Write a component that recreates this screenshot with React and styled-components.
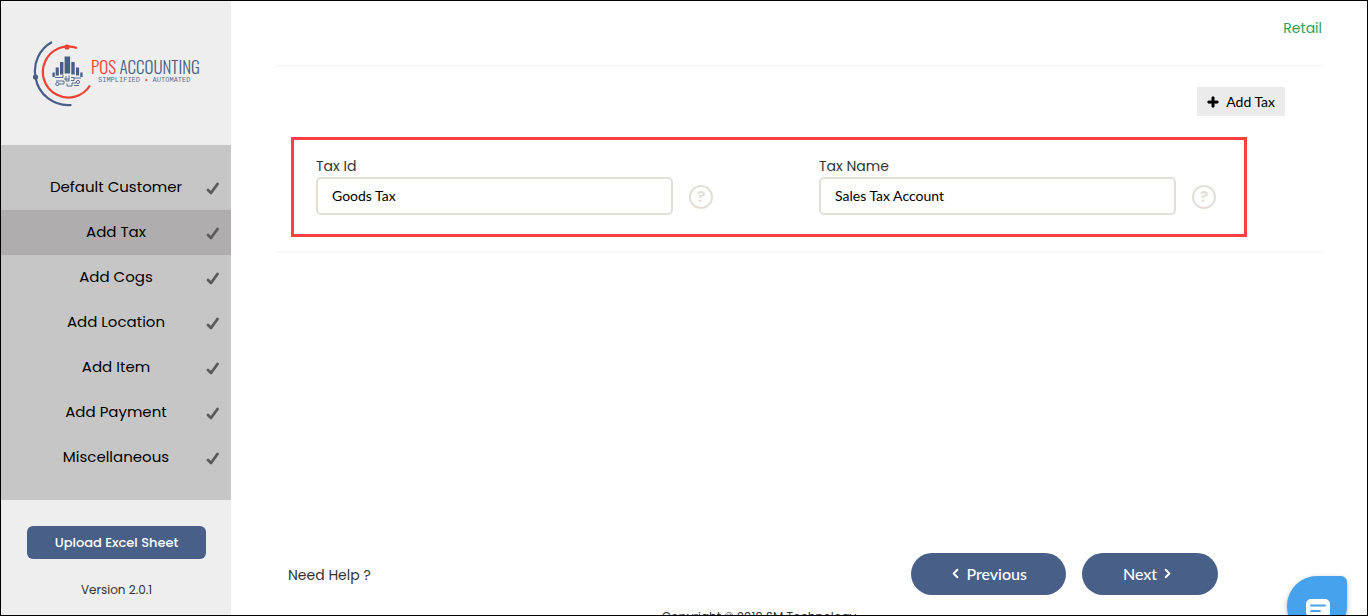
import React, { useState } from "react";
import styled, { createGlobalStyle } from "styled-components";
import { FaPlus } from "react-icons/fa";
import { FiChevronLeft, FiChevronRight } from "react-icons/fi";

const GlobalStyle = createGlobalStyle`
  * {
    box-sizing: border-box;
  }
  body {
    margin: 0;
    background: #fff;
    color: #333;
    font-family: Poppins, Inter, sans-serif;
    font-size: 14px;
  }
  button, input {
    font-family: Lato, sans-serif;
  }
`;

const Frame = styled.div`
  position: relative;
  display: flex;
  height: 100vh;
  overflow: hidden;
  border: 1px solid #000;
`;

const Sidebar = styled.aside`
  display: flex;
  flex-direction: column;
  flex: 0 0 230px;
  background: #eee;
`;

const Brand = styled.a`
  display: flex;
  justify-content: center;
  padding: 38px 0;
`;

const Menu = styled.nav`
  padding: 20px 0;
  background: #c6c6c6;
`;

const MenuItem = styled.a`
  display: grid;
  grid-template-columns: 36px 1fr 36px;
  align-items: center;
  height: 45px;
  padding-bottom: 2px;
  color: #000;
  background: ${(props) => (props.$active ? "#afadad" : "transparent")};
  font-size: 15px;
  text-align: center;
  text-decoration: none;

  span {
    grid-column: 2;
  }
  svg {
    justify-self: center;
    margin-top: 4px;
  }
`;

const SidebarBottom = styled.div`
  display: flex;
  flex-direction: column;
  align-items: center;
  gap: 22px;
  padding: 26px 25px 26px 26px;
  font-size: 12px;
`;

const UploadButton = styled.button`
  width: 100%;
  height: 33px;
  border: 0;
  border-radius: 6px;
  background: #485f88;
  color: #fff;
  font-family: Poppins, Inter, sans-serif;
  font-size: 13px;
  font-weight: 500;
  cursor: pointer;
`;

const Main = styled.main`
  display: flex;
  flex-direction: column;
  flex: 1;
  min-height: calc(100vh + 9px);
  padding: 0 45px;
`;

const Header = styled.header`
  display: flex;
  justify-content: flex-end;
  padding: 17px 0 27px;
  border-bottom: 2px solid #f9f9f9;
  color: #2fa14f;
  line-height: 20px;
`;

const Section = styled.section`
  padding: 20px 75px 14px 15px;
  border-bottom: 2px solid #f9f9f9;
`;

const Toolbar = styled.div`
  display: flex;
  justify-content: flex-end;
  margin: 0 -38px 21px 0;
`;

const AddButton = styled.button`
  display: flex;
  align-items: center;
  gap: 7px;
  height: 29px;
  padding: 0 10px;
  border: 0;
  background: #ebebeb;
  color: #000;
  font-size: 14px;
  cursor: pointer;
`;

const TaxForm = styled.form`
  display: grid;
  grid-template-columns: 1fr 1fr;
  gap: 106px;
  padding: 17px 28px 19px 22px;
  border: 3px solid #f94144;
`;

const Label = styled.label`
  display: block;
  padding-bottom: 2px;
  line-height: 18px;
`;

const FieldRow = styled.div`
  display: flex;
  align-items: center;
  gap: 16px;
`;

const Input = styled.input`
  flex: 1;
  min-width: 0;
  height: 38px;
  padding: 0 14px 2px;
  border: 2px solid #e3dfd7;
  border-radius: 5px;
  background: #fff;
  color: #000;
  font-size: 14px;
`;

const HelpButton = styled.button`
  width: 24px;
  height: 24px;
  margin-top: 2px;
  padding: 0;
  border: 2px solid #e3dfd7;
  border-radius: 50%;
  background: #fff;
  color: #e3dfd7;
  font-family: Poppins, Inter, sans-serif;
  font-size: 16px;
  font-weight: 600;
  line-height: 20px;
`;

const Footer = styled.footer`
  margin-top: auto;
`;

const Actions = styled.div`
  display: flex;
  align-items: center;
  gap: 16px;
  padding: 0 104px 0 12px;
`;

const HelpLink = styled.a`
  margin-right: auto;
  padding-top: 2px;
  color: #333;
  text-decoration: none;
`;

const PillButton = styled.button`
  display: flex;
  align-items: center;
  justify-content: center;
  gap: 3px;
  min-width: 136px;
  height: 42px;
  padding: 0 39px 2px 37px;
  border: 0;
  border-radius: 21px;
  background: #485f88;
  color: #fff;
  font-size: 16px;
  font-weight: 500;
  cursor: pointer;
`;

const Copyright = styled.p`
  margin: 13px 80px 0 0;
  font-size: 12px;
  line-height: 18px;
  text-align: center;
`;

const ChatButton = styled.button`
  position: absolute;
  right: 20px;
  bottom: -21px;
  display: flex;
  justify-content: center;
  width: 60px;
  height: 60px;
  padding: 23px 0 0 2px;
  border: 0;
  border-radius: 30px 6px 30px 30px;
  background: #46a2ec;
  box-shadow: 0 2px 5px rgba(0, 0, 0, 0.3);
`;

const menuItems = [
  "Default Customer",
  "Add Tax",
  "Add Cogs",
  "Add Location",
  "Add Item",
  "Add Payment",
  "Miscellaneous",
];

function Logo() {
  return (
    <svg width="170" height="68" viewBox="0 0 170 68" role="img" aria-label="POS Accounting">
      <g fill="none" strokeWidth="2.2">
        <path d="M21 3A33 33 0 0 0 4.500 38A33 33 0 0 0 40.500 66" stroke="#485f88" />
        <path d="M46 9A25.500 25.500 0 1 0 59 46.500" stroke="#ea4335" />
      </g>
      <circle cx="36" cy="8" r="2.600" fill="#ea4335" />
      <circle cx="4.500" cy="38" r="2.600" fill="#485f88" />
      <path
        d="M21.500 33.500h2.300v4.500h-2.300zM24.700 28.500h3.100v8h-3.100zM29 23h3.400v12.500H29zM33.600 17.500h5.500v17h-5.500zM40.300 23h3.400v12.500h-3.400zM45 28.500h3.100v8H45zM49.300 33.500h2.300v4.500h-2.300z"
        fill="#485f88"
      />
      <g fill="none" stroke="#485f88" strokeWidth="0.900">
        <path d="M24 38.500h8v-2.500M28 45h5v-3h-8M35 37v5h3M38 36.500v6M36 44.500v2.500h5v-3h4M40 38.500h3v3h-3M33 40h5M43 46.500h5M43 39h7" />
        <circle cx="26.300" cy="45" r="1.600" />
        <circle cx="47" cy="43" r="1.600" />
      </g>
      <text x="60" y="35" fill="#485f88" fontFamily="Oswald, 'Roboto Condensed', 'Liberation Sans Narrow', sans-serif" fontSize="17" fontWeight="300">
        <tspan fill="#ea4335">POS</tspan> ACCOUNTING
      </text>
      <text x="67" y="43" fill="#5d7096" fontFamily="'Liberation Mono', monospace" fontSize="7">
        SIMPLIFIED <tspan fill="#ea4335">•</tspan> AUTOMATED
      </text>
    </svg>
  );
}

function Check() {
  return (
    <svg width="14" height="16" viewBox="0 0 14 16">
      <path
        d="M2 9L5 12L11.500 3"
        fill="none"
        stroke="#5a5a5a"
        strokeWidth="2.800"
        strokeLinecap="round"
        strokeLinejoin="round"
      />
    </svg>
  );
}

function Field({ id, label, initial }) {
  const [value, setValue] = useState(initial);
  return (
    <div>
      <Label htmlFor={id}>{label}</Label>
      <FieldRow>
        <Input id={id} value={value} onChange={(e) => setValue(e.target.value)} />
        <HelpButton type="button" aria-label={`${label} help`}>?</HelpButton>
      </FieldRow>
    </div>
  );
}

function App() {
  return (
    <>
      <GlobalStyle />
      <Frame>
        <Sidebar>
          <Brand href="#">
            <Logo />
          </Brand>
          <Menu>
            {menuItems.map((item) => (
              <MenuItem key={item} href="#" $active={item === "Add Tax"}>
                <span>{item}</span>
                <Check />
              </MenuItem>
            ))}
          </Menu>
          <SidebarBottom>
            <UploadButton>Upload Excel Sheet</UploadButton>
            <span>Version 2.0.1</span>
          </SidebarBottom>
        </Sidebar>

        <Main>
          <Header>Retail</Header>
          <Section>
            <Toolbar>
              <AddButton>
                <FaPlus size={12} stroke="#000" strokeWidth={30} />
                Add Tax
              </AddButton>
            </Toolbar>
            <TaxForm>
              <Field id="taxId" label="Tax Id" initial="Goods Tax" />
              <Field id="taxName" label="Tax Name" initial="Sales Tax Account" />
            </TaxForm>
          </Section>

          <Footer>
            <Actions>
              <HelpLink href="#">Need Help ?</HelpLink>
              <PillButton>
                <FiChevronLeft size={15} strokeWidth={3} />
                Previous
              </PillButton>
              <PillButton>
                Next
                <FiChevronRight size={15} strokeWidth={3} />
              </PillButton>
            </Actions>
            <Copyright>Copyright © 2019 SM Technology</Copyright>
          </Footer>
        </Main>

        <ChatButton aria-label="Chat">
          <svg width="24" height="24" viewBox="0 0 24 24">
            <path d="M5 0h14a5 5 0 0 1 5 5v17l-5-4H5a5 5 0 0 1-5-5V5a5 5 0 0 1 5-5z" fill="#fff" />
            <path d="M5 6.500h14M5 12h9" stroke="#46a2ec" strokeWidth="1.800" strokeLinecap="round" />
          </svg>
        </ChatButton>
      </Frame>
    </>
  );
}

export default App;
